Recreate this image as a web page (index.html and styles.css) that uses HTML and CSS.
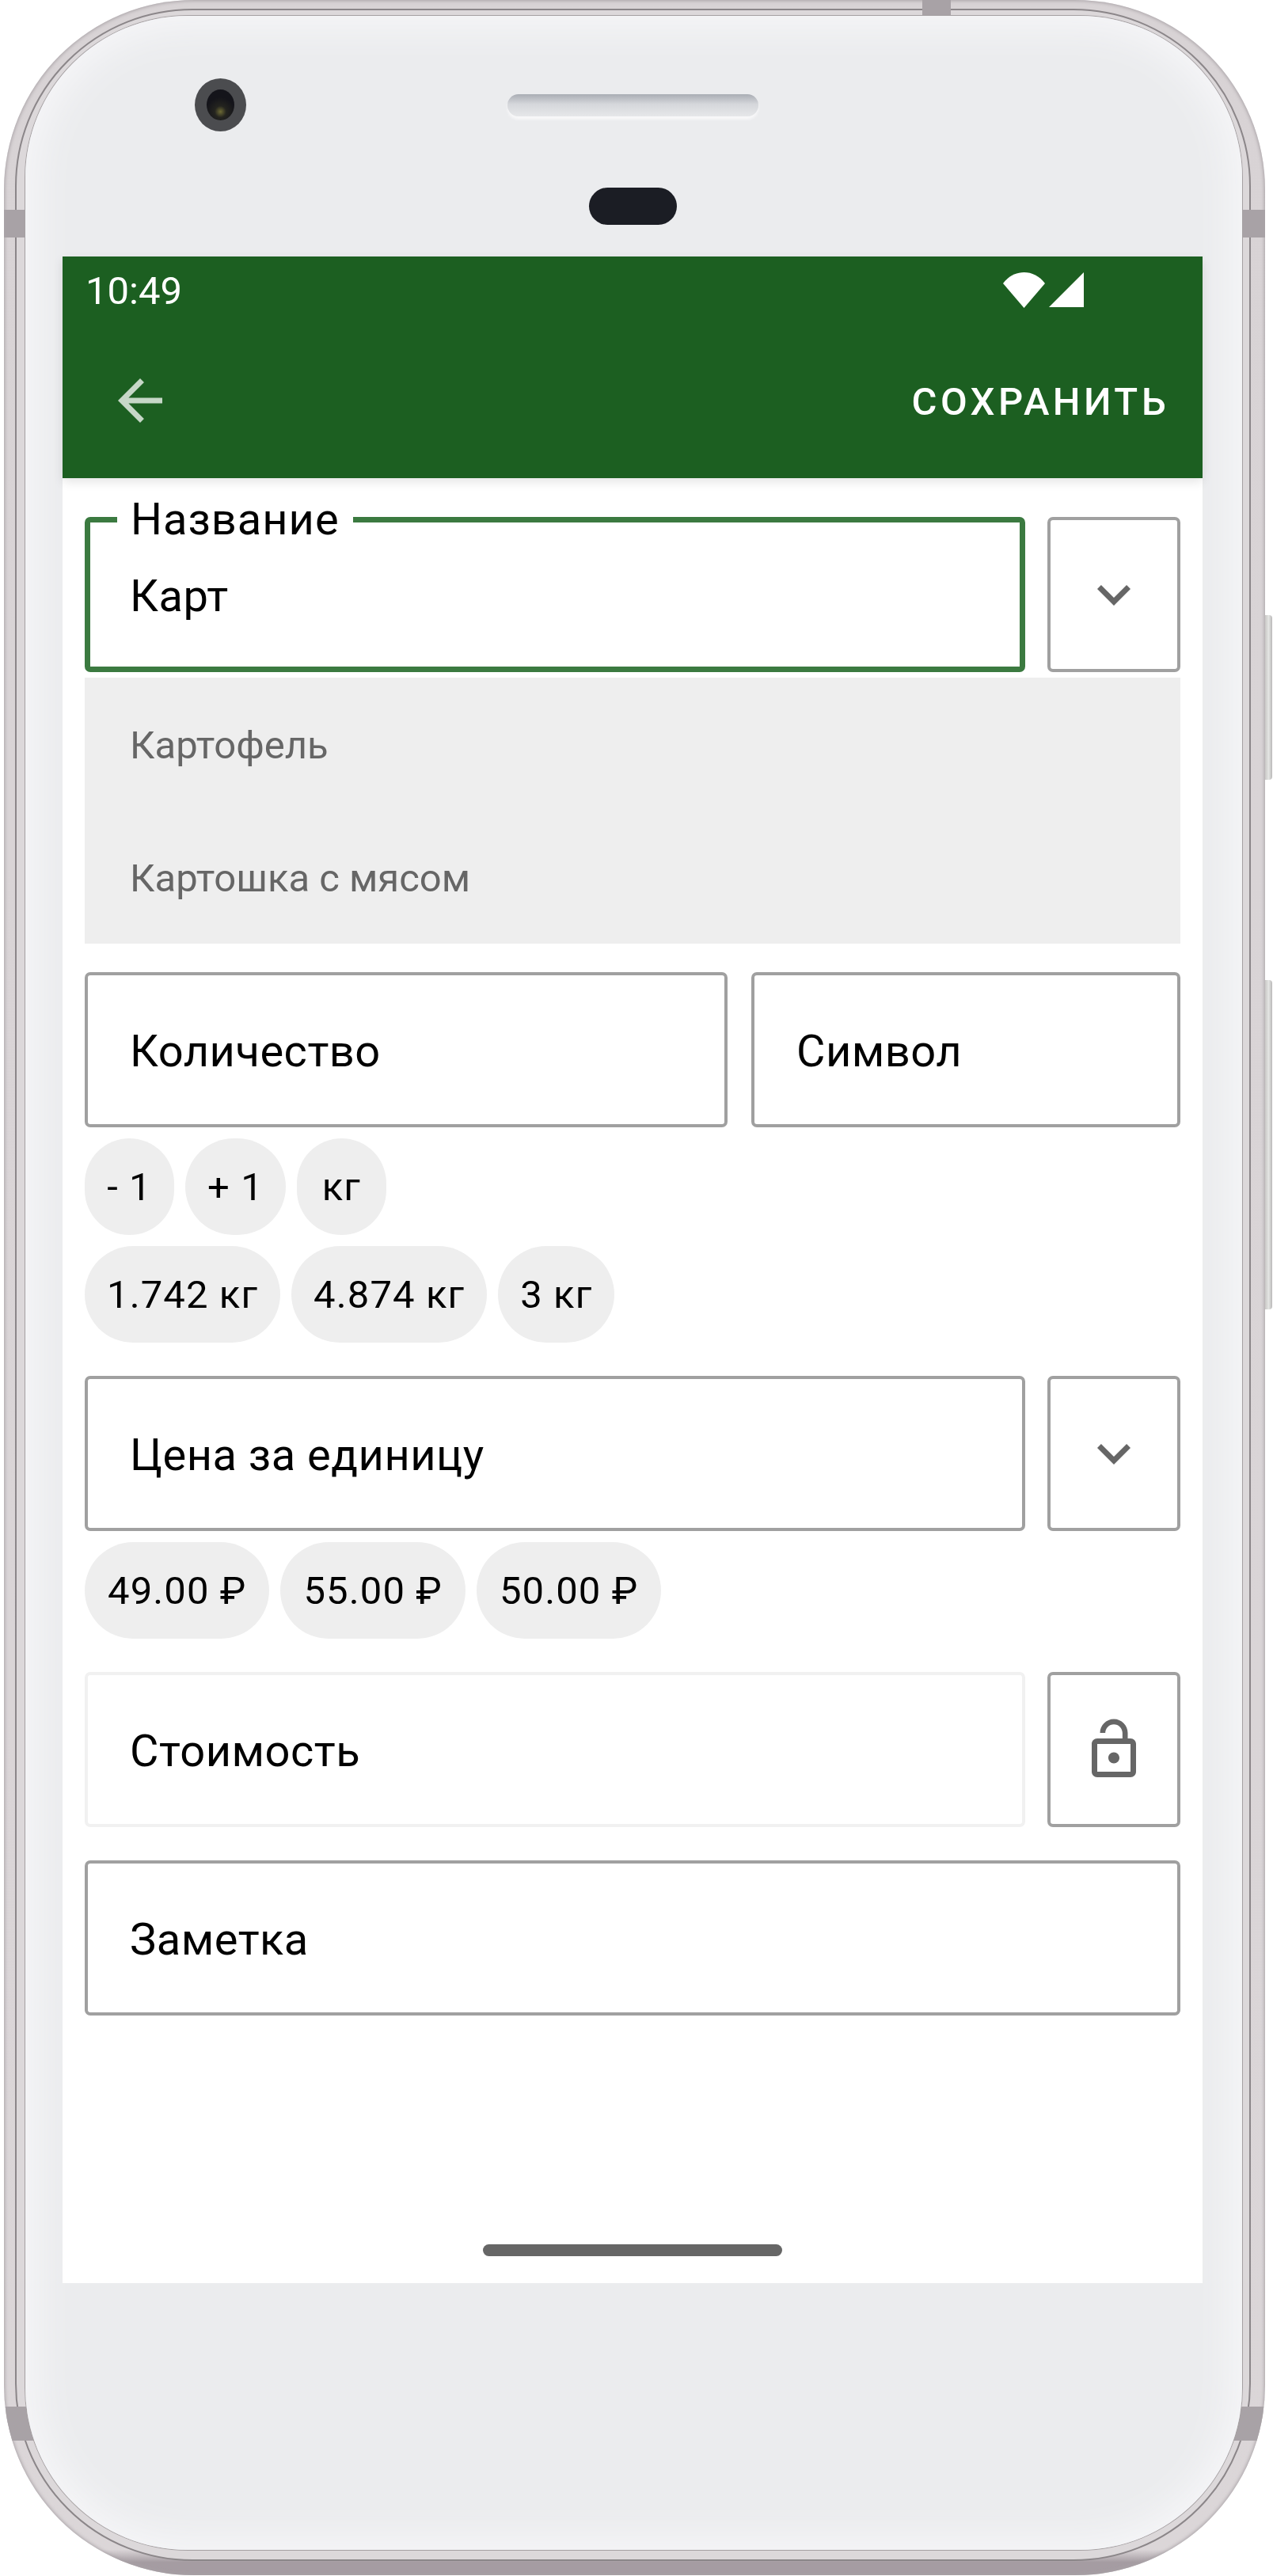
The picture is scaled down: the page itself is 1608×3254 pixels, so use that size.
FILE: index.html
```html
<!DOCTYPE html>
<html>
<head>
  <title>Добавить покупку</title>
  <link rel="stylesheet" href="styles.css">
</head>
<body>
  <div class="phone">
    <div class="side-btn power"></div>
    <div class="side-btn volume"></div>
    <div class="bands">
      <div class="band band-top"></div>
      <div class="band band-left-up"></div>
      <div class="band band-right-up"></div>
      <div class="band band-left-down"></div>
      <div class="band band-right-down"></div>
    </div>

    <div class="bezel">
      <div class="glass">
        <div class="camera"><div class="lens"></div></div>
        <div class="speaker"></div>
        <div class="sensor"></div>

        <div class="screen">
          <div class="app-header">
            <div class="status-bar">
              <span class="time">10:49</span>
              <div class="status-icons">
                <svg class="wifi" viewBox="0 0 53 45"><path d="M0 14C14-4.6 39-4.6 53 14L26.5 45Z"/></svg>
                <svg class="signal" viewBox="0 0 44 44"><path d="M44 0V44H0Z"/></svg>
              </div>
            </div>
            <div class="toolbar">
              <svg class="back-icon" viewBox="0 0 24 24"><path d="M20 11H7.83l5.59-5.59L12 4l-8 8 8 8 1.41-1.41L7.83 13H20v-2z"/></svg>
              <span class="save-btn">Сохранить</span>
            </div>
          </div>

          <div class="form">
            <div class="row">
              <div class="field grow focused">
                <span class="field-label">Название</span>
                Карт
              </div>
              <div class="icon-btn">
                <svg viewBox="0 0 24 24"><path d="M16.59 8.59L12 13.17 7.41 8.59 6 10l6 6 6-6z"/></svg>
              </div>
            </div>

            <div class="suggestions">
              <div class="suggestion">Картофель</div>
              <div class="suggestion">Картошка с мясом</div>
            </div>

            <div class="row row-amount">
              <div class="field amount">Количество</div>
              <div class="field grow">Символ</div>
            </div>
            <div class="chips">
              <span class="chip">- 1</span>
              <span class="chip">+ 1</span>
              <span class="chip">кг</span>
            </div>
            <div class="chips">
              <span class="chip">1.742 кг</span>
              <span class="chip">4.874 кг</span>
              <span class="chip">3 кг</span>
            </div>

            <div class="row row-spaced">
              <div class="field grow">Цена за единицу</div>
              <div class="icon-btn">
                <svg viewBox="0 0 24 24"><path d="M16.59 8.59L12 13.17 7.41 8.59 6 10l6 6 6-6z"/></svg>
              </div>
            </div>
            <div class="chips prices">
              <span class="chip">49.00 ₽</span>
              <span class="chip">55.00 ₽</span>
              <span class="chip">50.00 ₽</span>
            </div>

            <div class="row row-spaced">
              <div class="field grow disabled">Стоимость</div>
              <div class="icon-btn">
                <svg viewBox="0 0 24 24"><path d="M12 17c1.1 0 2-.9 2-2s-.9-2-2-2-2 .9-2 2 .9 2 2 2zm6-9h-1V6c0-2.76-2.24-5-5-5S7 3.24 7 6h1.9c0-1.71 1.39-3.1 3.1-3.1 1.71 0 3.1 1.39 3.1 3.1v2H6c-1.1 0-2 .9-2 2v10c0 1.1.9 2 2 2h12c1.1 0 2-.9 2-2V10c0-1.1-.9-2-2-2zm0 12H6V10h12v10z"/></svg>
              </div>
            </div>

            <div class="row row-spaced">
              <div class="field grow">Заметка</div>
            </div>
          </div>

          <div class="nav-bar"></div>
        </div>
      </div>
    </div>
  </div>
</body>
</html>
```

FILE: styles.css
```css
* {
  box-sizing: border-box;
}
html, body {
  margin: 0;
  padding: 0;
  background: #fff;
}
body {
  width: 1608px;
  height: 3254px;
  overflow: hidden;
  font-family: Roboto, "Noto Sans", sans-serif;
  color: #000;
}

/* Phone shell */
.phone {
  position: relative;
  width: 1593px;
  height: 3253px;
  margin-left: 5px;
  padding: 11px 18px 18px 14px;
  border-radius: 240px;
  background: linear-gradient(#d8d3d5 0%, #dbd6d8 99%, #a59ca2 99.5%, #a59ca2 100%);
  box-shadow: inset 0 0 4px 1px #a8a2a6;
}
.bezel {
  height: 100%;
  padding: 7px 9px 12px 11px;
  border: 2px solid #8b8689;
  border-radius: 224px;
  background: #dcd8da;
}
.glass {
  position: relative;
  height: 100%;
  padding: 304px 0 0 47px;
  border-radius: 205px;
  background: #ebecee;
  box-shadow: inset 0 0 46px 14px #f6f6f8, 0 0 0 1px #a5a0a2;
}
.side-btn {
  position: absolute;
  right: -9px;
  width: 9px;
  border-radius: 0 4px 4px 0;
  background: linear-gradient(90deg, #c9c8c6, #e4e5e3 50%, #b9b8b8);
}
.power {
  top: 777px;
  height: 208px;
}
.volume {
  top: 1238px;
  height: 416px;
}
.bands {
  position: absolute;
  top: 0;
  right: 0;
  bottom: 0;
  left: 0;
  overflow: hidden;
  border-radius: 240px;
}
.band {
  position: absolute;
  background: #a8a2a6;
}
.band-top {
  top: 0;
  left: 1160px;
  width: 36px;
  height: 24px;
}
.band-left-up, .band-right-up {
  top: 265px;
  width: 60px;
  height: 35px;
}
.band-left-down, .band-right-down {
  top: 3040px;
  width: 60px;
  height: 43px;
}
.band-left-up, .band-left-down {
  left: 0;
}
.band-right-up, .band-right-down {
  right: 0;
}
.camera {
  position: absolute;
  top: 79px;
  left: 214px;
  width: 65px;
  height: 67px;
  padding: 14px 15px;
  border-radius: 50%;
  background: #4b4c4f;
}
.lens {
  width: 35px;
  height: 39px;
  border-radius: 50%;
  background: radial-gradient(circle at 50% 72%, #6d6a35 0, #24241f 22%, #14141a 55%);
}
.speaker {
  position: absolute;
  top: 99px;
  left: 609px;
  width: 317px;
  height: 28px;
  border-radius: 14px;
  background: linear-gradient(#a9adb4, #d5d7db 45%, #e6e7e9);
  box-shadow: 0 4px 3px #f7f7f8;
}
.sensor {
  position: absolute;
  top: 217px;
  left: 712px;
  width: 111px;
  height: 47px;
  border-radius: 24px;
  background: #1b1d24;
}

/* App screen */
.screen {
  display: flex;
  flex-direction: column;
  width: 1440px;
  height: 2560px;
  background: #fff;
}
.app-header {
  position: relative;
  height: 280px;
  background: #1c5f21;
  color: #fff;
  box-shadow: 0 5px 12px rgba(0,0,0,0.1);
}
.status-bar {
  display: flex;
  justify-content: space-between;
  align-items: center;
  height: 84px;
  padding: 0 150px 0 29px;
}
.time {
  padding-top: 2px;
  font-size: 49px;
}
.status-icons {
  display: flex;
  align-items: center;
  gap: 5px;
}
.status-icons svg {
  display: block;
  fill: #fff;
}
.wifi {
  width: 53px;
  height: 45px;
}
.signal {
  width: 44px;
  height: 44px;
}
.toolbar {
  display: flex;
  justify-content: space-between;
  align-items: center;
  height: 196px;
  padding: 0 42px 0 56px;
}
.back-icon {
  width: 84px;
  height: 84px;
  fill: rgba(255,255,255,0.75);
}
.save-btn {
  padding-top: 3px;
  font-size: 49px;
  font-weight: 500;
  letter-spacing: 4.4px;
  text-transform: uppercase;
}

/* Form */
.form {
  flex: 1;
  padding: 49px 28px 0;
}
.row {
  display: flex;
  gap: 28px;
}
.row-amount {
  gap: 30px;
  margin-top: 36px;
}
.row-spaced {
  margin-top: 42px;
}
.field {
  position: relative;
  display: flex;
  align-items: center;
  height: 196px;
  padding: 3px 0 0 53px;
  border: 4px solid #a0a0a0;
  border-radius: 7px;
  font-size: 56px;
  letter-spacing: 0.5px;
}
.grow {
  flex: 1;
}
.amount {
  flex: 0 0 812px;
}
.focused {
  padding-left: 50px;
  border: 7px solid #3b7a40;
}
.disabled {
  border-color: #f1f1f1;
}
.field-label {
  position: absolute;
  top: -37px;
  left: 34px;
  padding: 0 17px;
  background: #fff;
  line-height: 66px;
  letter-spacing: 1px;
}
.icon-btn {
  display: flex;
  justify-content: center;
  align-items: center;
  width: 168px;
  height: 196px;
  border: 4px solid #a0a0a0;
  border-radius: 7px;
}
.icon-btn svg {
  width: 84px;
  height: 84px;
  fill: #666;
}
.suggestions {
  margin-top: 7px;
  background: #eee;
}
.suggestion {
  display: flex;
  align-items: center;
  height: 168px;
  padding: 3px 0 0 57px;
  font-size: 49px;
  color: #666;
}
.chips {
  display: flex;
  gap: 14px;
  margin-top: 14px;
}
.chip {
  display: flex;
  justify-content: center;
  align-items: center;
  min-width: 113px;
  height: 122px;
  padding: 0 28px;
  border-radius: 61px;
  background: #eee;
  font-size: 49px;
  letter-spacing: 1.1px;
}
.prices .chip {
  padding: 0 29px;
}
.nav-bar {
  align-self: center;
  width: 378px;
  height: 15px;
  margin-bottom: 34px;
  border-radius: 8px;
  background: #666;
}
```
